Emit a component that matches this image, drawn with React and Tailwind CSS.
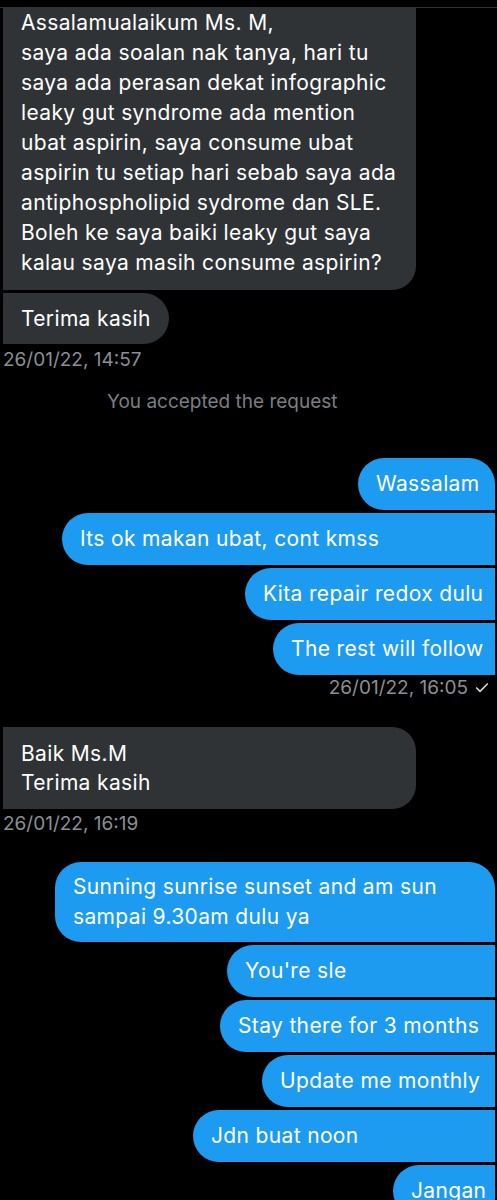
import { Check } from 'lucide-react'

const font = { fontFamily: 'Inter, "Noto Sans", sans-serif' }

function Received({ lines, className = '' }) {
  return (
    <div className={`ml-[3px] self-start bg-[#2f3336] text-white text-[21px] tracking-[0.35px] pl-[18px] pr-[18px] ${className}`}>
      {lines.map((l, i) => (
        <div key={i} className="whitespace-nowrap">{l}</div>
      ))}
    </div>
  )
}

function Sent({ left, lines, first = false, className = '' }) {
  return (
    <div
      className={`mr-[2px] bg-[#1d9bf0] text-white text-[21px] tracking-[0.35px] pl-[18px] pr-[14px] rounded-l-[26px] ${first ? 'rounded-tr-[26px]' : ''} ${left} ${className}`}
    >
      {lines.map((l, i) => (
        <div key={i} className="whitespace-nowrap">{l}</div>
      ))}
    </div>
  )
}

function Stamp({ text, className = '' }) {
  return <div className={`text-[19px] leading-[24px] text-[#8b8f94] ${className}`}>{text}</div>
}

export default function App() {
  return (
    <div className="w-[497px] min-h-[1200px] bg-black overflow-hidden flex flex-col" style={font}>
      <div className="h-[7px] bg-black border-b border-[#2f3336] box-content" />

      <Received
        className="leading-[30px] pb-[12px] rounded-br-[24px] w-[413px]"
        lines={[
          'Assalamualaikum Ms. M,',
          'saya ada soalan nak tanya, hari tu',
          'saya ada perasan dekat infographic',
          'leaky gut syndrome ada mention',
          'ubat aspirin, saya consume ubat',
          'aspirin tu setiap hari sebab saya ada',
          'antiphospholipid sydrome dan SLE.',
          'Boleh ke saya baiki leaky gut saya',
          'kalau saya masih consume aspirin?',
        ]}
      />
      <Received
        className="mt-[3px] leading-[31px] py-[10px] rounded-r-[26px]"
        lines={['Terima kasih']}
      />
      <Stamp text="26/01/22, 14:57" className="mt-[4px] ml-[3px]" />
      <div className="mt-[18px] pl-[107px] text-[19px] leading-[24px] text-[#7a7e83]">You accepted the request</div>

      <div className="mt-[44px] flex flex-col gap-[3px]">
        <Sent left="ml-[358px]" first className="leading-[52px]" lines={['Wassalam']} />
        <Sent left="ml-[62px]" className="leading-[52px]" lines={['Its ok makan ubat, cont kmss']} />
        <Sent left="ml-[245px]" className="leading-[52px]" lines={['Kita repair redox dulu']} />
        <Sent left="ml-[273px]" className="leading-[52px]" lines={['The rest will follow']} />
      </div>
      <div className="mt-[1px] pr-[7px] flex items-center justify-end gap-[6px]">
        <Stamp text="26/01/22, 16:05" />
        <Check size={16} strokeWidth={2.5} className="text-[#d0d3d6]" />
      </div>

      <Received
        className="mt-[27px] leading-[29px] py-[12px] rounded-r-[24px] w-[413px]"
        lines={['Baik Ms.M', 'Terima kasih']}
      />
      <Stamp text="26/01/22, 16:19" className="mt-[3px] ml-[3px]" />

      <div className="mt-[26px] flex flex-col gap-[3px]">
        <Sent
          left="ml-[55px]"
          first
          className="leading-[30px] py-[10px]"
          lines={['Sunning sunrise sunset and am sun', 'sampai 9.30am dulu ya']}
        />
        <Sent left="ml-[227px]" className="leading-[52px]" lines={["You're sle"]} />
        <Sent left="ml-[220px]" className="leading-[52px]" lines={['Stay there for 3 months']} />
        <Sent left="ml-[262px]" className="leading-[52px]" lines={['Update me monthly']} />
        <Sent left="ml-[193px]" className="leading-[52px]" lines={['Jdn buat noon']} />
        <Sent left="ml-[393px]" className="leading-[52px] pl-[17px]" lines={['Jangan']} />
      </div>
    </div>
  )
}
